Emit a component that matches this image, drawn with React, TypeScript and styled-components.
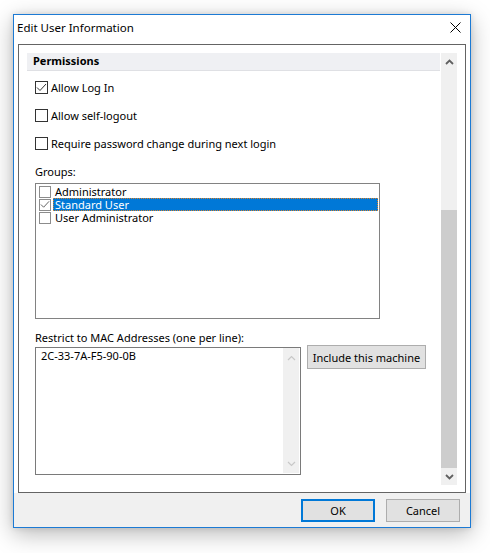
import React from "react";
import styled, { createGlobalStyle } from "styled-components";

const Global = createGlobalStyle`
  html, body { margin: 0; padding: 0; background: #ffffff; }
  body { font-family: "Noto Sans", "Segoe UI", sans-serif; font-size: 11px; color: #000; }
  * { box-sizing: border-box; }
`;

const Page = styled.div`
  padding: 14px 0 0 13px;
  width: 490px;
  height: 553px;
`;

const Window = styled.div`
  width: 458px;
  height: 514px;
  border: 1px solid #1c7ad4;
  background: #ffffff;
  box-shadow: 0 6px 22px rgba(0, 0, 0, 0.28), 0 0 6px rgba(0, 0, 0, 0.12);
  display: flex;
  flex-direction: column;
`;

const TitleBar = styled.div`
  height: 29px;
  display: flex;
  align-items: center;
  justify-content: space-between;
  padding: 0 9px 4px 3px;
  font-size: 11.5px;
`;

const CloseBtn = styled.div`
  width: 12px;
  height: 12px;
  display: flex;
  align-items: center;
  justify-content: center;
`;

const Body = styled.div`
  padding: 0 4px;
`;

const Panel = styled.div`
  height: 449px;
  border: 1px solid #646464;
  padding: 8px 7px 7px 8px;
  display: flex;
  gap: 1px;
`;

const Content = styled.div`
  width: 413px;
  display: flex;
  flex-direction: column;
  overflow: hidden;
`;

const SectionHeader = styled.div`
  height: 18px;
  background: #eff0f3;
  border-bottom: 1px solid #dfe0e4;
  font-weight: bold;
  padding-left: 6px;
  line-height: 15px;
`;

const CheckRows = styled.div`
  margin-top: 3px;
  padding-left: 8px;
  display: flex;
  flex-direction: column;
`;

const CheckRow = styled.div`
  height: 28px;
  display: flex;
  align-items: center;
  gap: 3px;
  padding-bottom: 1px;
`;

const Box = styled.div<{ $size: number; $dark?: boolean }>`
  width: ${(p) => p.$size}px;
  height: ${(p) => p.$size}px;
  border: 1px solid ${(p) => (p.$dark ? "#333333" : "#8c8c8c")};
  background: #ffffff;
  display: flex;
  align-items: center;
  justify-content: center;
  flex: none;
`;

const FieldLabel = styled.div<{ $top: number }>`
  margin-top: ${(p) => p.$top}px;
  padding-left: 8px;
  line-height: 15px;
  height: 15px;
`;

const ListBox = styled.div`
  margin: 4px 0 0 8px;
  width: 345px;
  height: 136px;
  border: 1px solid #828282;
  padding: 1px 1px 0 3px;
  display: flex;
  flex-direction: column;
`;

const ListItem = styled.div`
  height: 13px;
  display: flex;
  align-items: center;
`;

const ItemText = styled.div<{ $selected?: boolean }>`
  flex: 1;
  height: 13px;
  margin-left: 2px;
  padding-left: 1px;
  line-height: 11px;
  color: ${(p) => (p.$selected ? "#ffffff" : "#000000")};
  background: ${(p) => (p.$selected ? "#0078d7" : "transparent")};
  border: 1px ${(p) => (p.$selected ? "dotted #d9822b" : "solid transparent")};
`;

const MacRow = styled.div`
  margin-left: 8px;
  display: flex;
  align-items: flex-start;
  gap: 6px;
`;

const TextArea = styled.div`
  margin-top: 2px;
  width: 266px;
  height: 128px;
  border: 1px solid #7a7a7a;
  display: flex;
  padding: 0 1px 1px 0;
`;

const TextAreaText = styled.div`
  flex: 1;
  padding: 1px 0 0 5px;
  line-height: 14px;
`;

const MiniScroll = styled.div`
  width: 16px;
  background: #f0f0f0;
  display: flex;
  flex-direction: column;
  justify-content: space-between;
  align-items: center;
  padding: 7px 0 6px;
`;

const Button = styled.div<{ $w: number; $h: number; $default?: boolean }>`
  width: ${(p) => p.$w}px;
  height: ${(p) => p.$h}px;
  background: #e1e1e1;
  border: ${(p) => (p.$default ? "2px solid #0078d7" : "1px solid #adadad")};
  display: flex;
  align-items: center;
  justify-content: center;
  font-size: 11px;
  flex: none;
`;

const ScrollBar = styled.div`
  width: 16px;
  background: #f0f0f0;
  display: flex;
  flex-direction: column;
`;

const ScrollArrow = styled.div`
  height: 17px;
  display: flex;
  align-items: center;
  justify-content: center;
  flex: none;
`;

const ScrollTrack = styled.div`
  flex: 1;
  display: flex;
  flex-direction: column;
  justify-content: flex-end;
`;

const Thumb = styled.div`
  height: 258px;
  background: #cdcdcd;
`;

const Footer = styled.div`
  flex: 1;
  background: #f0f0f0;
  display: flex;
  justify-content: flex-end;
  align-items: flex-start;
  gap: 11px;
  padding: 6px 10px 0 0;
`;

const Check = ({ color }: { color: string }) => (
  <svg width="11" height="9" viewBox="0 0 11 9">
    <path d="M1 4.5 L4 7.5 L10 1" fill="none" stroke={color} strokeWidth="1" />
  </svg>
);

const Chevron = ({ up, color, weight }: { up?: boolean; color: string; weight: number }) => (
  <svg width="9" height="6" viewBox="0 0 9 6">
    <path
      d={up ? "M1 5 L4.5 1.5 L8 5" : "M1 1 L4.5 4.5 L8 1"}
      fill="none"
      stroke={color}
      strokeWidth={weight}
    />
  </svg>
);

const rows = [
  { label: "Allow Log In", checked: true },
  { label: "Allow self-logout", checked: false },
  { label: "Require password change during next login", checked: false },
];

const groups = [
  { label: "Administrator", checked: false },
  { label: "Standard User", checked: true },
  { label: "User Administrator", checked: false },
];

export default function App() {
  return (
    <>
      <Global />
      <Page>
        <Window>
          <TitleBar>
            <span>Edit User Information</span>
            <CloseBtn>
              <svg width="11" height="11" viewBox="0 0 11 11">
                <path d="M0.5 0.5 L10.5 10.5 M10.5 0.5 L0.5 10.5" stroke="#000" strokeWidth="1" />
              </svg>
            </CloseBtn>
          </TitleBar>
          <Body>
            <Panel>
              <Content>
                <SectionHeader>Permissions</SectionHeader>
                <CheckRows>
                  {rows.map((r) => (
                    <CheckRow key={r.label}>
                      <Box $size={13} $dark>
                        {r.checked && <Check color="#333" />}
                      </Box>
                      <span>{r.label}</span>
                    </CheckRow>
                  ))}
                </CheckRows>
                <FieldLabel $top={6}>Groups:</FieldLabel>
                <ListBox>
                  {groups.map((g, i) => (
                    <ListItem key={g.label}>
                      <Box $size={12}>{g.checked && <Check color="#555" />}</Box>
                      <ItemText $selected={i === 1}>{g.label}</ItemText>
                    </ListItem>
                  ))}
                </ListBox>
                <FieldLabel $top={11}>Restrict to MAC Addresses (one per line):</FieldLabel>
                <MacRow>
                  <TextArea>
                    <TextAreaText>2C-33-7A-F5-90-0B</TextAreaText>
                    <MiniScroll>
                      <Chevron up color="#c8c8c8" weight={1.2} />
                      <Chevron color="#c8c8c8" weight={1.2} />
                    </MiniScroll>
                  </TextArea>
                  <Button $w={119} $h={24}>Include this machine</Button>
                </MacRow>
              </Content>
              <ScrollBar>
                <ScrollArrow>
                  <Chevron up color="#606060" weight={1.8} />
                </ScrollArrow>
                <ScrollTrack>
                  <Thumb />
                </ScrollTrack>
                <ScrollArrow>
                  <Chevron color="#606060" weight={1.8} />
                </ScrollArrow>
              </ScrollBar>
            </Panel>
          </Body>
          <Footer>
            <Button $w={74} $h={23} $default>OK</Button>
            <Button $w={74} $h={23}>Cancel</Button>
          </Footer>
        </Window>
      </Page>
    </>
  );
}
